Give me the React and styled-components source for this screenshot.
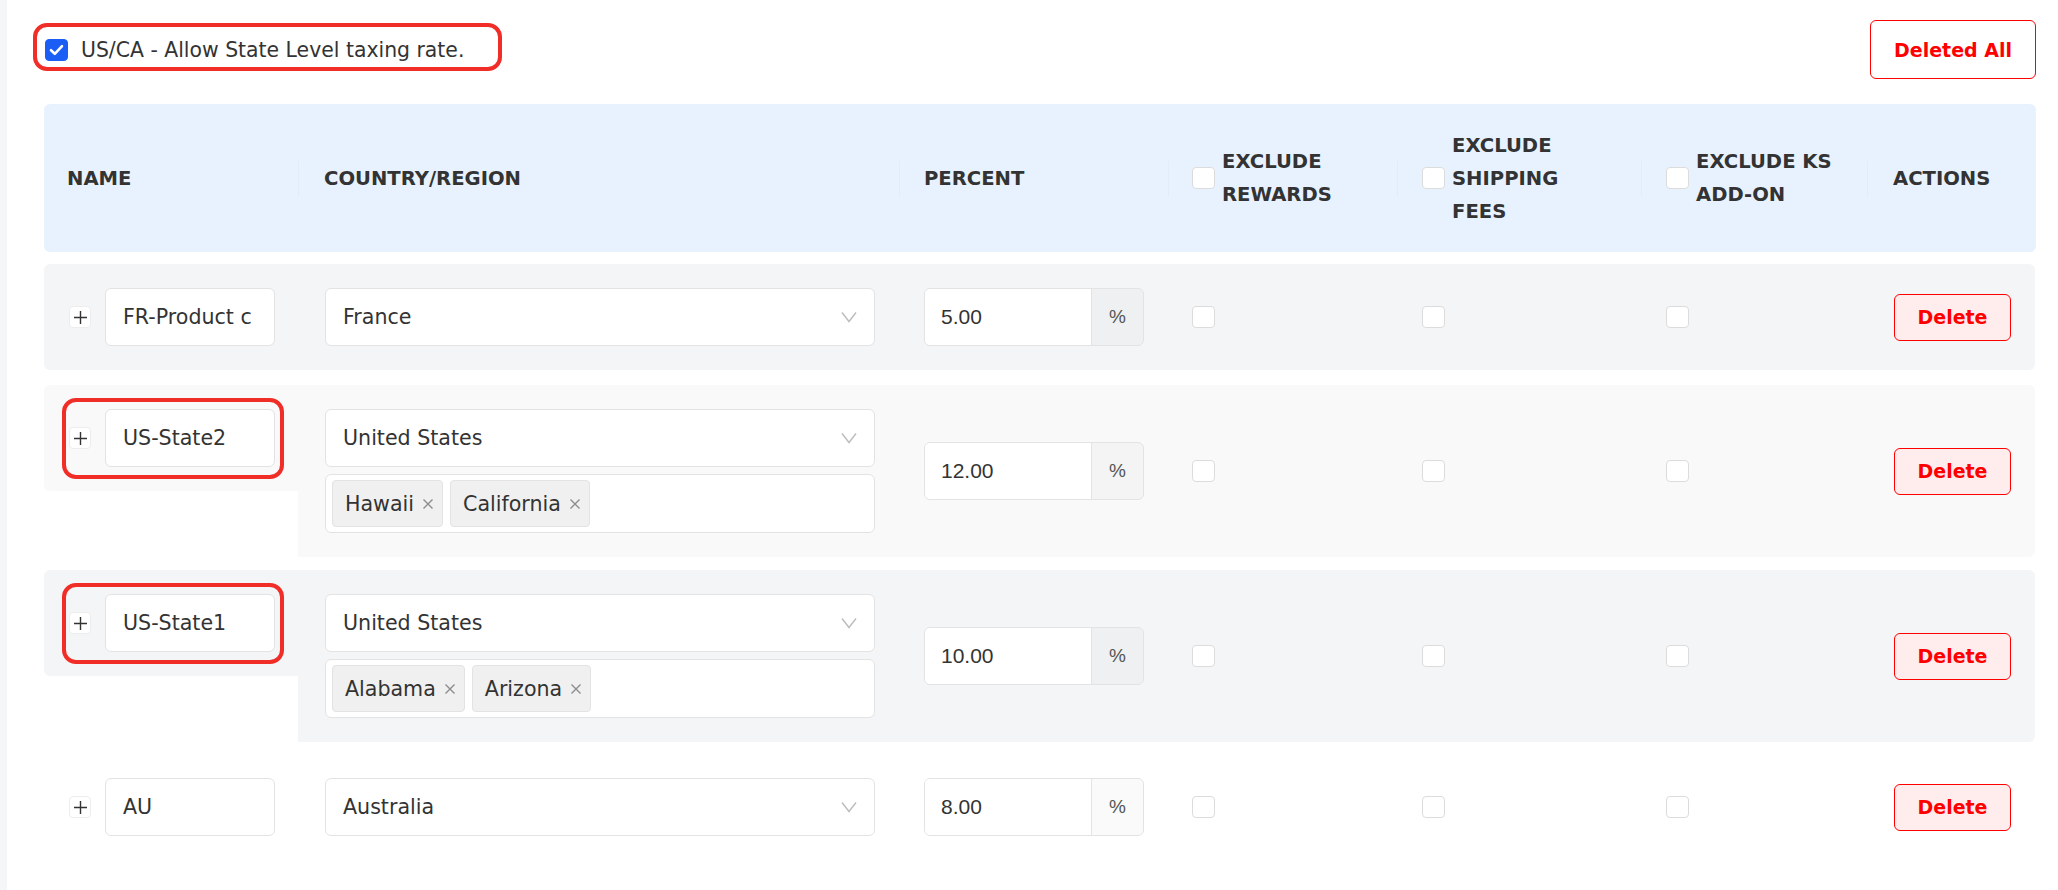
import React from "react";
import styled, { createGlobalStyle, css } from "styled-components";

const FONT = `"DejaVu Sans", "Open Sans", sans-serif`;
const NUMFONT = `"Liberation Sans", Arial, sans-serif`;
const COLS = "254px 601px 269px 229px 244px 226px 168px";

const Global = createGlobalStyle`
  html, body { margin: 0; padding: 0; background: #f5f6f8; }
  body { font-family: ${FONT}; color: #333; }
  * { box-sizing: border-box; }
`;

const Page = styled.div`
  margin-left: 7px;
  min-height: 890px;
  background: #fff;
  padding: 20px 22px 0 37px;
`;

const TopBar = styled.div`
  display: flex;
  align-items: center;
  justify-content: space-between;
  height: 59px;
  margin-bottom: 25px;
  padding-left: 1px;
`;

const Annotated = styled.div`
  position: relative;
  display: flex;
  align-items: center;
  ${(p) =>
    p.$inset &&
    css`
      &::after {
        content: "";
        position: absolute;
        inset: ${p.$inset};
        border: 4px solid #f02d27;
        border-radius: 14px;
        pointer-events: none;
      }
    `}
`;

const CheckLabel = styled.label`
  display: flex;
  align-items: center;
  gap: 13px;
  font-size: 20.4px;
  color: #333;
  line-height: 24px;
`;

const Box = styled.span`
  width: 23px;
  height: 22px;
  flex: none;
  border-radius: 4px;
  display: inline-flex;
  align-items: center;
  justify-content: center;
  background: ${(p) => (p.$checked ? "#1a5ef5" : "#fff")};
  border: 1px solid ${(p) => (p.$checked ? "#1a5ef5" : "#dcdcdc")};
`;

const OutlineButton = styled.button`
  height: 59px;
  width: 166px;
  border: 1px solid #ff0000;
  border-radius: 6px;
  background: #fff;
  color: #ff0000;
  font-family: ${FONT};
  font-weight: 700;
  font-size: 19px;
  padding: 0;
`;

const Header = styled.div`
  display: grid;
  grid-template-columns: ${COLS};
  height: 148px;
  align-items: center;
  background: #e8f2fe;
  border-radius: 6px;
  margin-bottom: 12px;
`;

const HeadCell = styled.div`
  position: relative;
  display: flex;
  align-items: center;
  gap: 7px;
  padding: 0 10px 0 ${(p) => p.$pl || 24}px;
  font-size: 19.6px;
  font-weight: 700;
  line-height: 33px;
  color: #333;
  white-space: nowrap;
  &::before {
    content: "";
    display: ${(p) => (p.$first ? "none" : "block")};
    position: absolute;
    left: 0;
    top: 50%;
    width: 1px;
    height: 35px;
    margin-top: -17px;
    background: rgba(0, 0, 0, 0.025);
  }
`;

const Row = styled.div`
  display: grid;
  grid-template-columns: ${COLS};
  margin-bottom: ${(p) => p.$mb}px;
  --row-bg: ${(p) => p.$bg};
`;

const Cell = styled.div`
  background: var(--row-bg);
  display: flex;
  align-items: center;
  padding: 0 24px 0 ${(p) => p.$pl || 24}px;
  ${(p) => p.$last && "border-radius: 0 6px 6px 0;"}
`;

const NameCell = styled.div`
  background: var(--row-bg);
  align-self: start;
  border-radius: 6px 0 0 6px;
  padding: 24px 0 24px 25px;
  display: flex;
`;

const CountryCell = styled.div`
  background: var(--row-bg);
  display: flex;
  flex-direction: column;
  gap: 7px;
  padding: 24px 24px 24px 27px;
`;

const PlusBtn = styled.span`
  width: 22px;
  height: 22px;
  flex: none;
  background: #fff;
  border: 1px solid #ededed;
  border-radius: 4px;
  display: inline-flex;
  align-items: center;
  justify-content: center;
  margin-right: 14px;
`;

const TextInput = styled.div`
  width: 170px;
  height: 58px;
  background: #fff;
  border: 1px solid #e3e3e3;
  border-radius: 6px;
  padding: 0 10px 0 17px;
  display: flex;
  align-items: center;
  font-size: 20.6px;
  color: #333;
  overflow: hidden;
  white-space: nowrap;
`;

const Select = styled.div`
  height: 58px;
  background: #fff;
  border: 1px solid #e3e3e3;
  border-radius: 6px;
  padding: 0 17px;
  display: flex;
  align-items: center;
  justify-content: space-between;
  font-size: 20.6px;
  color: #333;
`;

const TagBox = styled.div`
  height: 59px;
  background: #fff;
  border: 1px solid #e3e3e3;
  border-radius: 6px;
  padding: 0 6px;
  display: flex;
  align-items: center;
  gap: 7px;
`;

const Tag = styled.span`
  height: 47px;
  display: inline-flex;
  align-items: center;
  gap: 8px;
  padding: 0 8px 0 12px;
  background: #f0f0f0;
  border: 1px solid #e3e3e3;
  border-radius: 4px;
  font-size: 20.6px;
  color: #333;
`;

const InputGroup = styled.div`
  display: flex;
  width: 220px;
  height: 58px;
  border: 1px solid #e3e3e3;
  border-radius: 6px;
  overflow: hidden;
`;

const NumInput = styled.div`
  flex: 1;
  background: #fff;
  display: flex;
  align-items: center;
  padding-left: 16px;
  font-family: ${NUMFONT};
  font-size: 21px;
  color: #333;
`;

const Addon = styled.div`
  width: 52px;
  border-left: 1px solid #e3e3e3;
  background: rgba(0, 0, 0, 0.02);
  display: flex;
  align-items: center;
  justify-content: center;
  font-family: ${NUMFONT};
  font-size: 19px;
  color: #555;
`;

const DeleteBtn = styled.button`
  width: 117px;
  height: 47px;
  padding: 0;
  border: 1px solid #ff0000;
  border-radius: 6px;
  background: #ffeded;
  color: #ff0000;
  font-family: ${FONT};
  font-weight: 700;
  font-size: 19px;
`;

const Check = () => (
  <svg width="15" height="12" viewBox="0 0 15 12">
    <path d="M2 6.2 L5.8 9.8 L13 2.2" fill="none" stroke="#fff" strokeWidth="2.6" strokeLinecap="round" strokeLinejoin="round" />
  </svg>
);

const Plus = () => (
  <svg width="15" height="15" viewBox="0 0 15 15">
    <path d="M7.5 1 V14 M1 7.5 H14" stroke="#333" strokeWidth="1.4" />
  </svg>
);

const Chevron = () => (
  <svg width="16" height="12" viewBox="0 0 16 12">
    <path d="M1 1.5 L8 10.5 L15 1.5" fill="none" stroke="#bcbcbc" strokeWidth="1.4" />
  </svg>
);

const Close = () => (
  <svg width="12" height="12" viewBox="0 0 12 12">
    <path d="M1.5 1.5 L10.5 10.5 M10.5 1.5 L1.5 10.5" stroke="#8c8c8c" strokeWidth="1.4" />
  </svg>
);

const rows = [
  { name: "FR-Product c", country: "France", pct: "5.00", bg: "#f4f5f7", mb: 15 },
  { name: "US-State2", country: "United States", tags: ["Hawaii", "California"], pct: "12.00", bg: "#f9f9fa", mb: 13, hl: true },
  { name: "US-State1", country: "United States", tags: ["Alabama", "Arizona"], pct: "10.00", bg: "#f4f5f7", mb: 12, hl: true },
  { name: "AU", country: "Australia", pct: "8.00", bg: "#ffffff", mb: 0 },
];

export default function App() {
  return (
    <>
      <Global />
      <Page>
        <TopBar>
          <Annotated $inset="-15px -38px -9px -12px">
            <CheckLabel>
              <Box $checked>
                <Check />
              </Box>
              US/CA - Allow State Level taxing rate.
            </CheckLabel>
          </Annotated>
          <OutlineButton>Deleted All</OutlineButton>
        </TopBar>

        <Header>
          <HeadCell $first $pl={23}>NAME</HeadCell>
          <HeadCell $pl={26}>COUNTRY/REGION</HeadCell>
          <HeadCell $pl={25}>PERCENT</HeadCell>
          <HeadCell>
            <Box />
            <span>
              EXCLUDE
              <br />
              REWARDS
            </span>
          </HeadCell>
          <HeadCell $pl={25}>
            <Box />
            <span>
              EXCLUDE
              <br />
              SHIPPING
              <br />
              FEES
            </span>
          </HeadCell>
          <HeadCell $pl={25}>
            <Box />
            <span>
              EXCLUDE KS
              <br />
              ADD-ON
            </span>
          </HeadCell>
          <HeadCell $pl={26}>ACTIONS</HeadCell>
        </Header>

        {rows.map((r) => (
          <Row key={r.name} $bg={r.bg} $mb={r.mb}>
            <NameCell>
              <Annotated $inset={r.hl ? "-11px -9px -12px -7px" : null}>
                <PlusBtn>
                  <Plus />
                </PlusBtn>
                <TextInput>{r.name}</TextInput>
              </Annotated>
            </NameCell>
            <CountryCell>
              <Select>
                {r.country}
                <Chevron />
              </Select>
              {r.tags && (
                <TagBox>
                  {r.tags.map((t) => (
                    <Tag key={t}>
                      {t}
                      <Close />
                    </Tag>
                  ))}
                </TagBox>
              )}
            </CountryCell>
            <Cell $pl={25}>
              <InputGroup>
                <NumInput>{r.pct}</NumInput>
                <Addon>%</Addon>
              </InputGroup>
            </Cell>
            <Cell>
              <Box />
            </Cell>
            <Cell $pl={25}>
              <Box />
            </Cell>
            <Cell $pl={25}>
              <Box />
            </Cell>
            <Cell $pl={27} $last>
              <DeleteBtn>Delete</DeleteBtn>
            </Cell>
          </Row>
        ))}
      </Page>
    </>
  );
}
